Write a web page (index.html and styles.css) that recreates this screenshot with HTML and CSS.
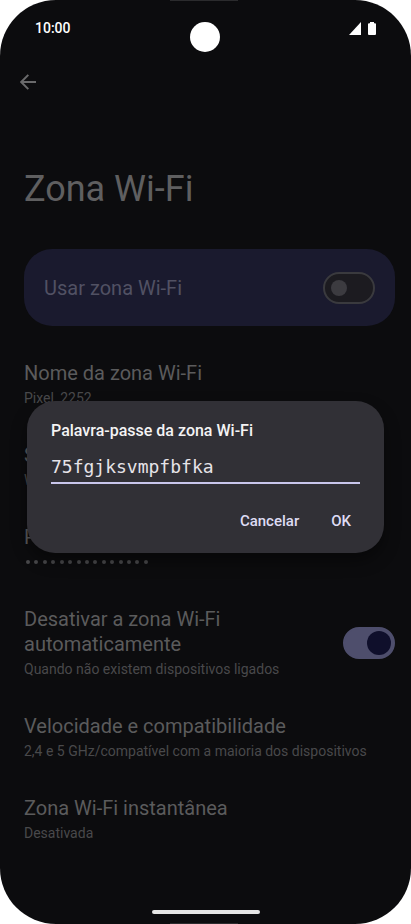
FILE: index.html
```html
<!DOCTYPE html>
<html lang="pt-PT">
<head>
<meta charset="utf-8">
<meta name="viewport" content="width=device-width, initial-scale=1">
<title>Zona Wi-Fi</title>
<link rel="stylesheet" href="styles.css">
</head>
<body>
<div class="screen">
  <span class="edge edge-top"></span>
  <span class="camera"></span>
  <header class="status">
    <time class="clock">10:00</time>
    <span class="status-icons">
      <svg width="12" height="13" viewBox="0 0 12 13" aria-hidden="true"><path d="M12 0V13H0Z" fill="#fff"/></svg>
      <svg width="8" height="13" viewBox="0 0 8 13" aria-hidden="true"><path d="M2 0H6V1.200H7Q8 1.200 8 2.200V12Q8 13 7 13H1Q0 13 0 12V2.200Q0 1.200 1 1.200H2Z" fill="#fff"/></svg>
    </span>
  </header>
  <main class="content">
    <button class="back" type="button" aria-label="Voltar">
      <svg width="16" height="16" viewBox="0 0 16 16" aria-hidden="true"><path d="M8.300 .9L1.200 8L8.300 15.100M1.200 8H16" fill="none" stroke="#6a6a6b" stroke-width="2"/></svg>
    </button>
    <h1 class="title">Zona Wi-Fi</h1>
    <div class="card">
      <label for="use">Usar zona Wi-Fi</label>
      <input class="switch" id="use" type="checkbox" role="switch">
    </div>
    <ul class="list">
      <li class="row"><div><p class="name">Nome da zona Wi-Fi</p><p class="detail">Pixel_2252</p></div></li>
      <li class="row"><div><p class="name">Segurança</p><p class="detail">WPA2/WPA3-Personal</p></div></li>
      <li class="row"><div><p class="name">Palavra-passe</p>
        <p class="detail dots"><i></i><i></i><i></i><i></i><i></i><i></i><i></i><i></i><i></i><i></i><i></i><i></i><i></i><i></i><i></i></p></div></li>
      <li class="row">
        <div><label class="name" for="auto">Desativar a zona Wi-Fi automaticamente</label><p class="detail">Quando não existem dispositivos ligados</p></div>
        <input class="switch" id="auto" type="checkbox" role="switch" checked>
      </li>
      <li class="row"><div><p class="name">Velocidade e compatibilidade</p><p class="detail">2,4 e 5 GHz/compatível com a maioria dos dispositivos</p></div></li>
      <li class="row"><div><p class="name">Zona Wi-Fi instantânea</p><p class="detail">Desativada</p></div></li>
    </ul>
  </main>
  <div class="overlay">
    <form class="dialog" role="dialog">
      <label class="dialog-title" for="password">Palavra-passe da zona Wi-Fi</label>
      <input class="field" id="password" type="text" value="75fgjksvmpfbfka">
      <div class="actions">
        <button class="action" type="button">Cancelar</button>
        <button class="action" type="button">OK</button>
      </div>
    </form>
  </div>
  <span class="home"></span>
  <span class="edge edge-bottom"></span>
</div>
</body>
</html>
```
FILE: styles.css
```css
* { box-sizing: border-box; }
body { margin: 0; background: #fff; font-family: Roboto, sans-serif; }
h1, p, ul { margin: 0; padding: 0; }
button, input { font: inherit; margin: 0; }
.screen {
  position: relative;
  display: flex;
  flex-direction: column;
  min-height: 100vh;
  overflow: hidden;
  border-radius: 56px;
  background: #0c0c0e;
}
.edge {
  position: absolute;
  left: 50%;
  width: 68px;
  height: 1px;
  margin-left: -36px;
  background: #2b2b2d;
}
.edge-top { top: 0; }
.edge-bottom { bottom: 0; }
.camera {
  position: absolute;
  top: 22px;
  left: 50%;
  width: 30px;
  height: 30px;
  margin-left: -16px;
  border-radius: 50%;
  background: #fff;
}
.status {
  display: flex;
  align-items: center;
  justify-content: space-between;
  height: 56px;
  padding: 0 35px;
  color: #fff;
}
.clock { font-size: 14px; font-weight: 500; line-height: 20px; }
.status-icons { display: flex; gap: 7px; }
.content { padding: 14px 16px 0 24px; }
.back {
  display: block;
  height: 24px;
  margin-left: -4px;
  padding: 4px 0;
  border: 0;
  background: none;
}
.back svg { display: block; }
.title {
  margin-top: 71px;
  color: #5f5f60;
  font-size: 36px;
  font-weight: 400;
  line-height: 48px;
}
.card {
  display: flex;
  align-items: center;
  justify-content: space-between;
  height: 77px;
  margin-top: 36px;
  padding: 0 20px;
  border-radius: 28px;
  background: #1a1a2e;
  color: #515163;
  font-size: 20px;
}
.list { margin-top: 35px; list-style: none; }
.row {
  display: flex;
  align-items: center;
  justify-content: space-between;
  gap: 32px;
  margin-bottom: 35px;
}
.name { display: block; color: #5b5b5c; font-size: 20px; line-height: 25px; }
.detail { margin-top: 2px; color: #49494b; font-size: 14px; line-height: 20px; }
.dots {
  display: flex;
  align-items: center;
  justify-content: space-between;
  width: 124px;
  height: 20px;
  padding-left: 2px;
}
.dots i { width: 4px; height: 4px; border-radius: 50%; background: #49494b; }
.switch {
  display: flex;
  flex: none;
  align-items: center;
  width: 52px;
  height: 32px;
  padding: 0 6px;
  border: 2px solid #3a3a3e;
  border-radius: 16px;
  appearance: none;
  background: #1c1b20;
}
.switch::before { content: ""; width: 16px; height: 16px; border-radius: 50%; background: #3c3b40; }
.switch:checked { justify-content: flex-end; padding: 0 2px; border-color: #4e4e6c; background: #4e4e6c; }
.switch:checked::before { width: 24px; height: 24px; background: #0f0f2b; }
.overlay {
  position: absolute;
  inset: 0;
  display: grid;
  align-items: center;
  padding: 30px 27px 0;
}
.dialog {
  padding: 18px 24px 14px;
  border-radius: 28px;
  background: #313036;
  box-shadow: 0 8px 16px rgba(0, 0, 0, .4);
}
.dialog-title { display: block; color: #f4f3f4; font-size: 16px; font-weight: 500; line-height: 24px; }
.field {
  display: block;
  width: 100%;
  height: 30px;
  margin-top: 11px;
  padding: 0 0 4px;
  border: 0;
  border-bottom: 2px solid #c9c6ec;
  outline: 0;
  background: none;
  color: #e6e3e8;
  font-family: "DejaVu Sans Mono", monospace;
  font-size: 18px;
}
.actions { display: flex; justify-content: flex-end; gap: 32px; margin-top: 19px; padding-right: 9px; }
.action { height: 36px; padding: 0; border: 0; background: none; color: #dedcf4; font-size: 15px; font-weight: 500; }
.home {
  width: 108px;
  height: 4px;
  margin: auto auto 10px;
  border-radius: 2px;
  background: #e6e6e6;
}
```
